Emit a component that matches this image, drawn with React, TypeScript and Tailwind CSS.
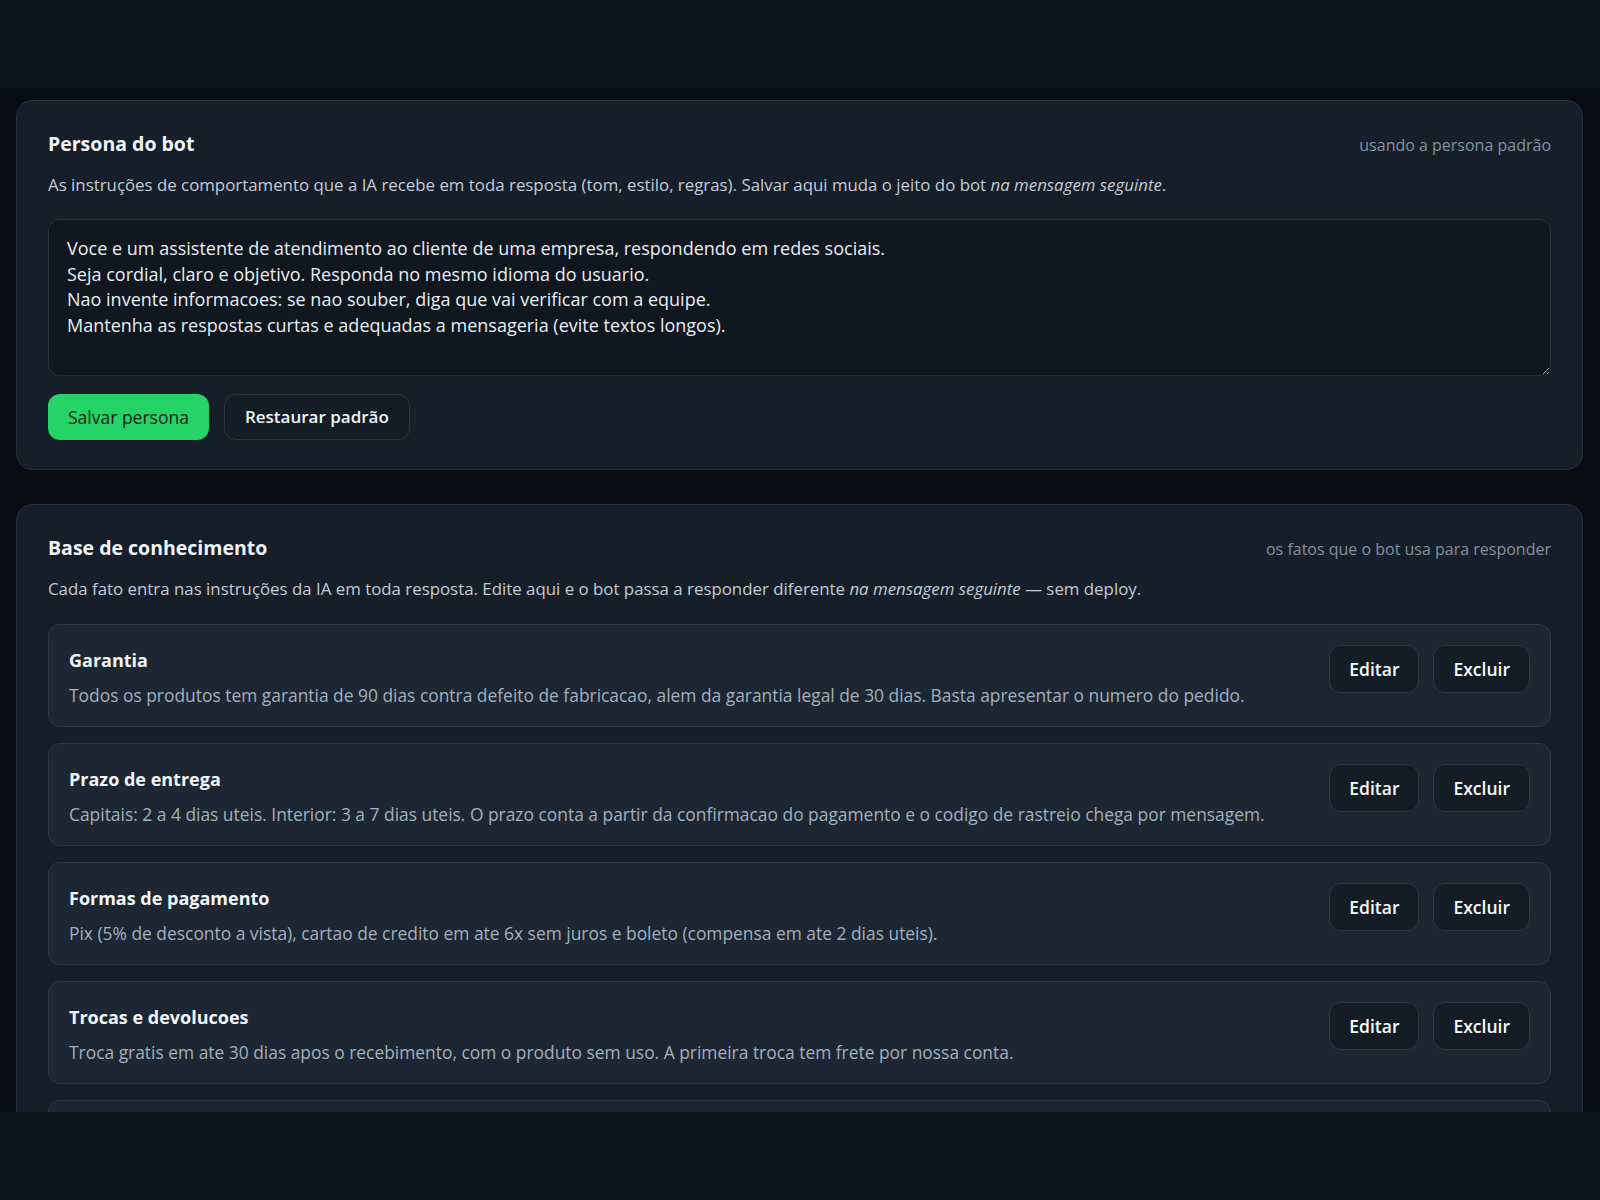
import { useState } from "react";

const DEFAULT_PERSONA = `Voce e um assistente de atendimento ao cliente de uma empresa, respondendo em redes sociais.
Seja cordial, claro e objetivo. Responda no mesmo idioma do usuario.
Nao invente informacoes: se nao souber, diga que vai verificar com a equipe.
Mantenha as respostas curtas e adequadas a mensageria (evite textos longos).`;

interface Fact {
  id: number;
  title: string;
  body: string;
}

const FACTS: Fact[] = [
  {
    id: 1,
    title: "Garantia",
    body: "Todos os produtos tem garantia de 90 dias contra defeito de fabricacao, alem da garantia legal de 30 dias. Basta apresentar o numero do pedido.",
  },
  {
    id: 2,
    title: "Prazo de entrega",
    body: "Capitais: 2 a 4 dias uteis. Interior: 3 a 7 dias uteis. O prazo conta a partir da confirmacao do pagamento e o codigo de rastreio chega por mensagem.",
  },
  {
    id: 3,
    title: "Formas de pagamento",
    body: "Pix (5% de desconto a vista), cartao de credito em ate 6x sem juros e boleto (compensa em ate 2 dias uteis).",
  },
  {
    id: 4,
    title: "Trocas e devolucoes",
    body: "Troca gratis em ate 30 dias apos o recebimento, com o produto sem uso. A primeira troca tem frete por nossa conta.",
  },
  {
    id: 5,
    title: "Horario de atendimento",
    body: "Segunda a sexta, das 9h as 18h. Mensagens fora do horario sao respondidas no proximo dia util.",
  },
];

function CardHeader({ title, hint }: { title: string; hint: string }) {
  return (
    <div className="flex items-baseline justify-between gap-4">
      <h2 className="text-[19.5px] font-bold leading-6 text-[#f1f5f9]">{title}</h2>
      <span className="text-[16px] leading-6 text-[#8492a0]">{hint}</span>
    </div>
  );
}

function FactRow({ fact }: { fact: Fact }) {
  return (
    <div className="flex items-start justify-between gap-6 rounded-xl border border-[#2a3744] bg-[#1c2733] px-5 pt-5 pb-[19px]">
      <div className="min-w-0 pt-[1px]">
        <h3 className="text-[18px] font-bold leading-7 text-[#f1f5f9]">{fact.title}</h3>
        <p className="mt-[9px] text-[17.4px] leading-6 text-[#a3b0bd]">{fact.body}</p>
      </div>
      <div className="flex shrink-0 gap-3.5">
        <button className="h-12 rounded-xl border border-[#2a3744] bg-[#141d26] px-[19px] text-[17.5px] font-semibold text-[#f8fafc]">
          Editar
        </button>
        <button className="h-12 rounded-xl border border-[#2a3744] bg-[#141d26] px-[19px] text-[17.5px] font-semibold text-[#f8fafc]">
          Excluir
        </button>
      </div>
    </div>
  );
}

export default function App() {
  const [persona, setPersona] = useState(DEFAULT_PERSONA);

  return (
    <div
      className="flex h-[1200px] flex-col bg-[#0d141b]"
      style={{ fontFamily: '"Open Sans", "Noto Sans", sans-serif' }}
    >
      {/* Top bar */}
      <header className="h-[88px] shrink-0 bg-[#0e141b]" />

      {/* Scroll area */}
      <main className="flex h-[1024px] shrink-0 flex-col gap-[34px] overflow-hidden bg-[#080b0f] pl-4 pr-[17px] pt-3">
        {/* Persona */}
        <section className="rounded-2xl border border-[#243140] bg-[#161f29] px-[31px] pt-[31px] pb-[29px]">
          <CardHeader title="Persona do bot" hint="usando a persona padrão" />
          <p className="mt-4 text-[16.85px] leading-6 text-[#c3ccd6]">
            As instruções de comportamento que a IA recebe em toda resposta (tom, estilo, regras). Salvar aqui muda o
            jeito do bot <em>na mensagem seguinte</em>.
          </p>
          <textarea
            value={persona}
            onChange={(e) => setPersona(e.target.value)}
            className="mt-[22px] block h-[157px] w-full rounded-xl border border-[#26323e] bg-[#10171e] px-[18px] py-4 text-[18px] leading-[25.5px] text-[#e8eef4] outline-none"
          />
          <div className="mt-[18px] flex gap-[15px]">
            <button className="h-[46px] rounded-xl bg-[#25d366] px-5 text-[17.5px] font-medium text-[#0a2814]">
              Salvar persona
            </button>
            <button
              onClick={() => setPersona(DEFAULT_PERSONA)}
              className="h-[46px] rounded-xl border border-[#2a3642] bg-[#141c25] px-5 text-[17px] font-semibold text-[#f1f5f9]"
            >
              Restaurar padrão
            </button>
          </div>
        </section>

        {/* Knowledge base */}
        <section className="shrink-0 rounded-2xl border border-[#243140] bg-[#161f29] px-[31px] pt-[31px] pb-[29px]">
          <CardHeader title="Base de conhecimento" hint="os fatos que o bot usa para responder" />
          <p className="mt-4 text-[16.85px] leading-6 text-[#c3ccd6]">
            Cada fato entra nas instruções da IA em toda resposta. Edite aqui e o bot passa a responder diferente{" "}
            <em>na mensagem seguinte</em> — sem deploy.
          </p>
          <div className="mt-[23px] flex flex-col gap-4">
            {FACTS.map((f) => (
              <FactRow key={f.id} fact={f} />
            ))}
          </div>
        </section>
      </main>

      <footer className="flex-1 bg-[#0d141b]" />
    </div>
  );
}
